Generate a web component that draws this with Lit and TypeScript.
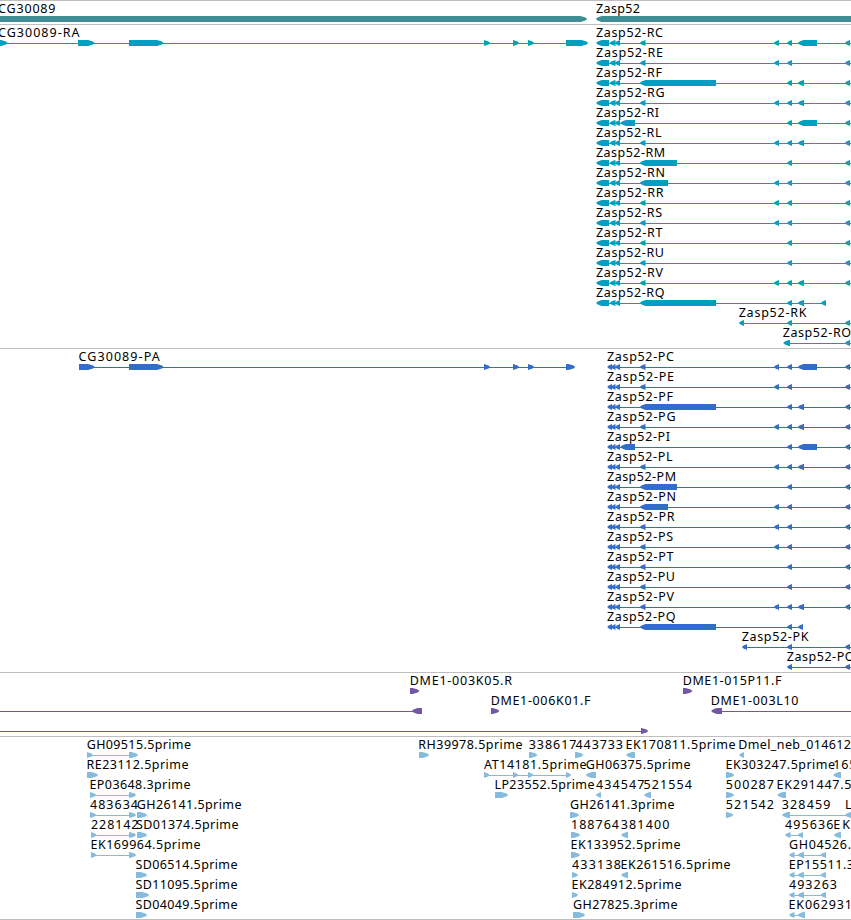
import { LitElement, html, svg, css } from "lit";
import { customElement, property } from "lit/decorators.js";

type Span = [number, number];
interface Feature {
  label?: string;
  x?: number;
  /** right edge of the label */
  end?: number;
  dir: "l" | "r";
  blocks: Span[];
  line?: Span;
}
interface Track {
  kind: string;
  rows: Feature[][];
}

const WIDTH = 851;
const EDGE = 860;

const f = (
  label: string,
  x: number,
  end: number,
  dir: "l" | "r",
  blocks: Span[],
  line?: Span
): Feature => ({ label, x, end, dir, blocks, line });

// Exons shared by the Zasp52 isoforms
const A: Span = [639.5, 645.5];
const A_F: Span = [639.5, 716];
const A_M: Span = [639.5, 677];
const A_N: Span = [639.5, 668];
const I: Span = [620, 635];
const B: Span = [773.5, 779];
const C: Span = [786.5, 792];
const D: Span = [797.5, 804];
const D_L: Span = [797.5, 817];
const E: Span = [844.5, 850];

const isoforms: [string, Span[]][] = [
  ["C", [A, B, C, D_L, E]],
  ["E", [A, B, C, E]],
  ["F", [A_F, C, D, E]],
  ["G", [A, B, C, D, E]],
  ["I", [I, C, D_L, E]],
  ["L", [A, B, C, D, E]],
  ["M", [A_M, C, E]],
  ["N", [A_N, B, C, E]],
  ["R", [A, B, C, E]],
  ["S", [A, B, C, E]],
  ["T", [A, C, E]],
  ["U", [A, C, E]],
  ["V", [A, B, C, D, E]],
];

const letterEnd: Record<string, number> = {
  C: 67, E: 67, F: 66, G: 68.5, I: 63, L: 65.5, M: 69, N: 69, R: 67.5, S: 66, T: 66.5, U: 68, V: 67, Q: 68.5,
};

function isoformRows(prefix: string, x: number, head: Span[], qTail: Span[]): Feature[][] {
  const rows = isoforms.map(([k, blocks]) => [
    f(`Zasp52-${prefix}${k}`, x, x + letterEnd[k], "l", [...head, ...blocks], [head[0][0] + 2, EDGE]),
  ]);
  const q = [...head, A_F, C, ...qTail];
  rows.push([f(`Zasp52-${prefix}Q`, x, x + letterEnd.Q, "l", q, [head[0][0] + 2, q[q.length - 1][1]])]);
  return rows;
}

const rnaRows = isoformRows("R", 596, [[595.7, 609], [609.3, 615.5], [614.5, 620]], [D, [820.5, 826]]);
rnaRows[0].unshift(
  f("CG30089-RA", -2, 79.5, "r", [[-2, 8], [78, 95], [129, 164], [484, 490.5], [513, 519.5], [528, 534.5], [566, 588.5]], [-5, 586])
);
rnaRows.push([f("Zasp52-RK", 738.7, 806.5, "l", [[738.5, 744], C, E], [741, EDGE])]);
rnaRows.push([f("Zasp52-RO", 782.7, 851, "l", [[782.8, 790], E], [785, EDGE])]);

const proteinRows = isoformRows("P", 607, [[606.8, 612], [610.5, 615.5], [614.8, 620]], [[797.5, 803]]);
proteinRows[0].unshift(
  f("CG30089-PA", 78.5, 159.7, "r", [[79, 95], [129, 164], [484, 490.5], [513, 519.5], [528, 534.5], [566, 575.5]], [80, 573])
);
proteinRows.push([f("Zasp52-PK", 741.7, 808.5, "l", [[741.5, 747], C, E], [744, EDGE])]);
proteinRows.push([f("Zasp52-PO", 786.7, 854.5, "l", [C, E], [789, EDGE])]);

const tracks: Track[] = [
  {
    kind: "gene",
    rows: [[
      f("CG30089", -2, 55.5, "r", [[-10, 587.5]]),
      f("Zasp52", 596, 640, "l", [[595.5, EDGE]]),
    ]],
  },
  { kind: "rna", rows: rnaRows },
  { kind: "protein", rows: proteinRows },
  {
    kind: "bac",
    rows: [
      [
        f("DME1-003K05.R", 409.7, 512, "r", [[410, 419.7]]),
        f("DME1-015P11.F", 682.7, 781.5, "r", [[683, 692.7]]),
      ],
      [
        { dir: "l", blocks: [[411.5, 422]], line: [-5, 414] },
        f("DME1-006K01.F", 490.7, 590.5, "r", [[491, 499.7]]),
        f("DME1-003L10", 710.7, 798.5, "l", [[710.8, 722]], [722, EDGE]),
      ],
      [{ dir: "r", blocks: [[641, 648.5]], line: [-5, 646] }],
    ],
  },
  {
    kind: "est",
    rows: [
      [
        f("GH09515.5prime", 86.7, 191, "r", [[87, 93.5], [129, 138.5]], [88, 136]),
        f("RH39978.5prime", 418.3, 522.5, "r", [[419, 429.5]]),
        f("338617", 528.7, 576.5, "r", [[529, 537.7]]),
        f("443733", 575.5, 623, "r", [[575, 583.7]]),
        f("EK170811.5prime", 625.5, 735.5, "l", [[625.7, 635]]),
        f("Dmel_neb_014612", 738.3, 851, "l", [[738.7, 744]]),
      ],
      [
        f("RE23112.5prime", 86.5, 188.5, "r", [[87, 98.5]]),
        f("AT14181.5prime", 484, 586.5, "r", [[484, 490], [513, 518.7], [528, 533.7], [566, 571.5]], [485, 569]),
        f("GH06375.5prime", 585.7, 690.5, "l", [[585.5, 596]]),
        f("EK303247.5prime", 725.5, 835, "r", [[726, 734.7]]),
        f("165", 833.3, 856.5, "l", [[832.8, 841]]),
      ],
      [
        f("EP03648.3prime", 89.5, 190.5, "r", [[90, 96.5], [129, 136.5]], [91, 134]),
        f("LP23552.5prime", 494.5, 594.5, "r", [[495, 508.5]]),
        f("434547", 596, 644.5, "l", [[595.5, 601]]),
        f("521554", 643.5, 692, "l", [[643.7, 651]]),
        f("500287", 725.7, 774, "r", [[726, 734.5]]),
        f("EK291447.5", 776.5, 851.5, "l", [[777, 786]]),
      ],
      [
        f("483634", 90, 138, "r", [[90, 96.5], [129, 136.5]], [91, 134]),
        f("GH26141.5prime", 136.7, 241.5, "r", [[137, 147.5]]),
        f("GH26141.3prime", 570, 674.5, "r", [[570, 579.5]]),
        f("521542", 725.7, 774, "r", [[726, 733.7]]),
        f("328459", 781.7, 830.5, "l", [[781.7, 790], [844.7, 856]], [788, EDGE]),
        f("L", 845, 852, "l", []),
      ],
      [
        f("228142", 91, 138.5, "r", [[91, 97], [129, 136.5]], [92, 134]),
        f("SD01374.5prime", 136, 238.5, "r", [[137, 147.5]]),
        f("188764", 571, 619, "r", [[571, 580.5]]),
        f("381400", 620.7, 669.5, "l", [[620.7, 628]]),
        f("495636", 785, 833.5, "l", [[784.7, 790.5], [797.3, 803]], [787, 800]),
        f("EK", 833.3, 850, "l", [[833.5, 841]]),
      ],
      [
        f("EK169964.5prime", 90.5, 200.5, "r", [[91, 97], [129, 136.5]], [92, 134]),
        f("EK133952.5prime", 570.5, 680.5, "r", [[571, 580.5]]),
        f("GH04526.", 789, 851, "l", [[788.7, 794.5], [797.3, 804], [820, 826]], [791, 824]),
      ],
      [
        f("SD06514.5prime", 135.5, 237.5, "r", [[136, 147.5]]),
        f("433138", 572, 621, "r", [[572, 578.5]]),
        f("EK261516.5prime", 620.5, 730.5, "l", [[620.7, 628]]),
        f("EP15511.3", 788.7, 854, "l", [[788.7, 794.5], [797.3, 804], [820, 826]], [791, 824]),
      ],
      [
        f("SD11095.5prime", 135.5, 237.5, "r", [[136, 149.5]]),
        f("EK284912.5prime", 571.5, 681.5, "r", [[572, 578.5]]),
        f("493263", 789, 837, "l", [[788.7, 794.5], [797.3, 804], [820, 826]], [791, 824]),
      ],
      [
        f("SD04049.5prime", 135.5, 237.5, "r", [[136, 147.5]]),
        f("GH27825.3prime", 573, 677.5, "r", [[573, 585.5]]),
        f("EK062931", 788.5, 852, "l", [[788.7, 794.5], [797.3, 805]], [791, 800]),
      ],
    ],
  },
];

/** Block whose leading side tapers to a soft point. */
function arrow([a, b]: Span, dir: "l" | "r"): string {
  const w = b - a;
  if (dir === "l") {
    const h = Math.min(w, 6);
    return `M${b} 13V19H${a + h}L${a + 2} 17.4L${a + 0.3} 16L${a + 2} 14.6L${a + h} 13Z`;
  }
  const h = Math.min(w, 7);
  return `M${a} 13V19H${b - h}L${b - 2} 17.4L${b - 0.3} 16L${b - 2} 14.6L${b - h} 13Z`;
}

@customElement("track-row")
export class TrackRow extends LitElement {
  @property({ attribute: false }) features: Feature[] = [];

  static styles = css`
    :host { display: block; height: 20px; }
    svg { display: block; }
    .label {
      font-family: "Noto Sans", sans-serif;
      font-size: 12.5px;
      fill: #000;
    }
    .shape { fill: currentColor; }
  `;

  render() {
    return html`<svg width=${WIDTH} height="20" viewBox="0 0 851 20">
      ${this.features.map((g) => svg`
        ${g.line ? svg`<rect class="shape" x=${g.line[0]} y="16" width=${g.line[1] - g.line[0]} height="1"></rect>` : null}
        ${g.blocks.map((b) => svg`<path class="shape" d=${arrow(b, g.dir)}></path>`)}
        ${g.label ? svg`<text class="label" x=${g.x!} y="10" textLength=${g.end! - g.x!} lengthAdjust="spacing">${g.label}</text>` : null}
      `)}
    </svg>`;
  }
}

@customElement("app-root")
export class AppRoot extends LitElement {
  static styles = css`
    :host {
      display: block;
      width: 851px;
      height: 920px;
      overflow: hidden;
      background: #fff;
    }
    .track { border-top: 1px solid #bebebe; padding: 2px 0 1px; }
    .gene { color: #3f8e95; }
    .rna { color: #009fc2; }
    .protein { color: #326ccc; }
    .bac { color: #7356a8; }
    .est { color: #86bbdd; padding-bottom: 0; border-bottom: 1px solid #bebebe; }
  `;

  render() {
    return tracks.map(
      (t) => html`<section class="track ${t.kind}">
        ${t.rows.map((r) => html`<track-row .features=${r}></track-row>`)}
      </section>`
    );
  }
}
